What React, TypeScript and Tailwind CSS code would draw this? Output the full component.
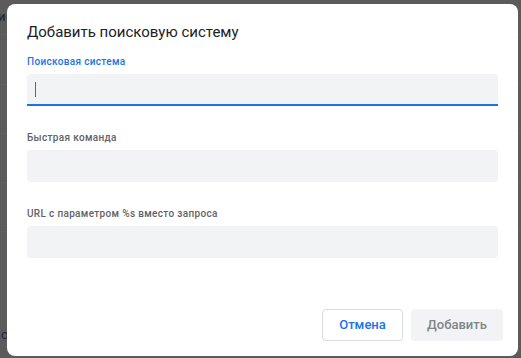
import React from 'react';

const font = { fontFamily: 'Roboto, "Noto Sans", sans-serif' };

function Field({ label, focused }: { label: string; focused?: boolean }) {
  return (
    <div className="flex flex-col">
      <label
        className={`h-[16px] text-[10px] leading-[16px] font-medium tracking-[0.33px] ${
          focused ? 'text-[#1a73e8]' : 'text-[#5f6368]'
        }`}
      >
        {label}
      </label>
      <div
        className={`mt-[4px] h-[32px] bg-[#f1f3f4] rounded-[4px] flex items-center px-[8px] ${
          focused ? 'border-b-2 border-[#1a73e8] rounded-b-none' : ''
        }`}
      >
        {focused && <span className="block w-px h-[15px] bg-[#1a73e8]" />}
      </div>
    </div>
  );
}

export default function App() {
  return (
    <div className="relative w-[521px] h-[358px] bg-[#5b5b5b] overflow-hidden" style={font}>
      {/* page behind the overlay */}
      <div className="flex flex-col">
        <div className="h-[35px] text-[#202020] text-[13px] leading-[34px] border-b border-[#616161]">
          <span className="-ml-[2px]">и</span>
        </div>
        <div className="h-[50px] border-b border-[#616161]" />
        <div className="h-[49px] border-b border-[#616161]" />
        <div className="h-[49px] border-b border-[#616161]" />
        <div className="h-[49px] border-b border-[#616161]" />
      </div>
      <span className="absolute left-[1px] top-[325px] text-[13px] text-[#1c2a3a]">c</span>

      {/* dialog */}
      <div className="absolute left-[7px] top-[4px] w-[511px] h-[352px] bg-white rounded-[8px] flex flex-col pt-[16px] pl-[20px] pr-[20px] pb-[15px]">
        <h1 className="h-[24px] text-[15px] leading-[24px] text-[#202124] font-normal">
          Добавить поисковую систему
        </h1>
        <div className="mt-[10px] flex flex-col gap-[24px]">
          <Field label="Поисковая система" focused />
          <Field label="Быстрая команда" />
          <Field label="URL с параметром %s вместо запроса" />
        </div>
        <div className="mt-auto flex justify-end gap-[8px] -mr-[5px]">
          <button className="w-[81px] h-[32px] rounded-[4px] border border-[#dadce0] bg-white text-[#1a73e8] text-[13px] font-medium">
            Отмена
          </button>
          <button className="w-[92px] h-[32px] rounded-[4px] bg-[#f1f3f4] text-[#80868b] text-[13px] font-medium">
            Добавить
          </button>
        </div>
      </div>
    </div>
  );
}
